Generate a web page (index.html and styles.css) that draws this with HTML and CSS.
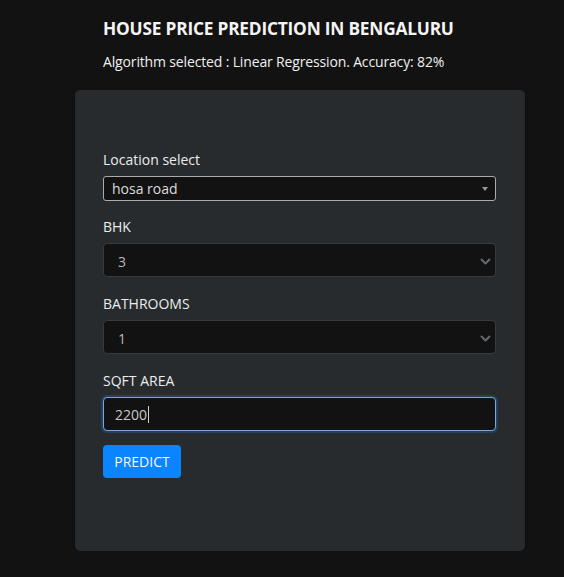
FILE: index.html
```html
<!DOCTYPE html>
<html lang="en">
<head>
<meta charset="utf-8">
<title>House Price Prediction</title>
<link rel="stylesheet" href="styles.css">
</head>
<body>
<div class="page">
  <header class="header">
    <h1 class="title">HOUSE PRICE PREDICTION IN BENGALURU</h1>
    <p class="subtitle">Algorithm selected : Linear Regression. Accuracy: 82%</p>
  </header>
  <main class="card">
    <form class="form">
      <div class="field field-first">
        <label class="label">Location select</label>
        <div class="select select-light">
          <span>hosa road</span>
          <svg class="caret" width="6" height="4" viewBox="0 0 6 4"><path d="M0 0 H6 L3 4 Z" fill="#9a9a9a"/></svg>
        </div>
      </div>
      <div class="field">
        <label class="label">BHK</label>
        <div class="select select-dark">
          <span>3</span>
          <svg class="chev" width="11" height="7" viewBox="0 0 11 7"><path d="M1.5 1.5 L5.5 5.5 L9.5 1.5" fill="none" stroke="#65696d" stroke-width="2" stroke-linecap="round" stroke-linejoin="round"/></svg>
        </div>
      </div>
      <div class="field">
        <label class="label">BATHROOMS</label>
        <div class="select select-dark">
          <span>1</span>
          <svg class="chev" width="11" height="7" viewBox="0 0 11 7"><path d="M1.5 1.5 L5.5 5.5 L9.5 1.5" fill="none" stroke="#65696d" stroke-width="2" stroke-linecap="round" stroke-linejoin="round"/></svg>
        </div>
      </div>
      <div class="field field-last">
        <label class="label">SQFT AREA</label>
        <div class="input input-focus"><span>2200</span><span class="cursor"></span></div>
      </div>
      <button type="button" class="btn">PREDICT</button>
    </form>
  </main>
</div>
</body>
</html>
```
FILE: styles.css
```css
* { box-sizing: border-box; }
html, body {
  margin: 0;
  padding: 0;
  background: #121212;
}
body {
  font-family: "Open Sans", "Noto Sans", "Liberation Sans", sans-serif;
  color: #e9e9e9;
}
.page {
  width: 450px;
  margin-left: 75px;
}
.header {
  padding: 17px 28px 0 28px;
}
.title {
  margin: 0;
  font-size: 17.3px;
  font-weight: 700;
  line-height: 24px;
  color: #f4f4f4;
  letter-spacing: -0.2px;
}
.subtitle {
  margin: 10px 0 0 0;
  font-size: 14px;
  line-height: 21px;
  color: #f0f0f0;
  letter-spacing: -0.15px;
}
.card {
  margin-top: 18px;
  height: 461px;
  background: #272b2e;
  border-radius: 5px;
  box-shadow: 0 1px 3px rgba(0,0,0,0.5);
  padding: 59px 29px 0 28px;
}
.form {
  display: flex;
  flex-direction: column;
}
.field {
  display: flex;
  flex-direction: column;
  margin-bottom: 16px;
}
.field-first {
  margin-bottom: 15px;
}
.field-last {
  margin-bottom: 14px;
}
.label {
  font-size: 14px;
  line-height: 21px;
  color: #ececec;
  margin-bottom: 6px;
}
.select, .input {
  display: flex;
  align-items: center;
  justify-content: space-between;
  background: #121212;
  font-size: 14px;
}
.select-light {
  height: 25px;
  border: 1px solid #a9abad;
  border-radius: 3px;
  padding: 0 7px 0 8px;
  color: #dcdcdc;
}
.select-dark {
  height: 34px;
  border: 1px solid #383b3e;
  border-radius: 4px;
  padding: 2px 4px 0 14px;
  color: #b8b8b8;
}
.input {
  height: 34px;
  border-radius: 4px;
  padding: 0 11px;
  color: #c8c8c8;
  justify-content: flex-start;
}
.input-focus {
  border: 1px solid #7ea6d6;
  box-shadow: 0 0 0 2px rgba(30, 100, 190, 0.35);
}
.cursor {
  display: inline-block;
  width: 1px;
  height: 17px;
  background: #d0d0d0;
  margin-left: 1px;
}
.btn {
  align-self: flex-start;
  width: 78px;
  height: 33px;
  border: none;
  border-radius: 4px;
  background: #0a84ff;
  color: #f5f9ff;
  font-family: inherit;
  font-size: 14px;
  padding: 0;
}
```
